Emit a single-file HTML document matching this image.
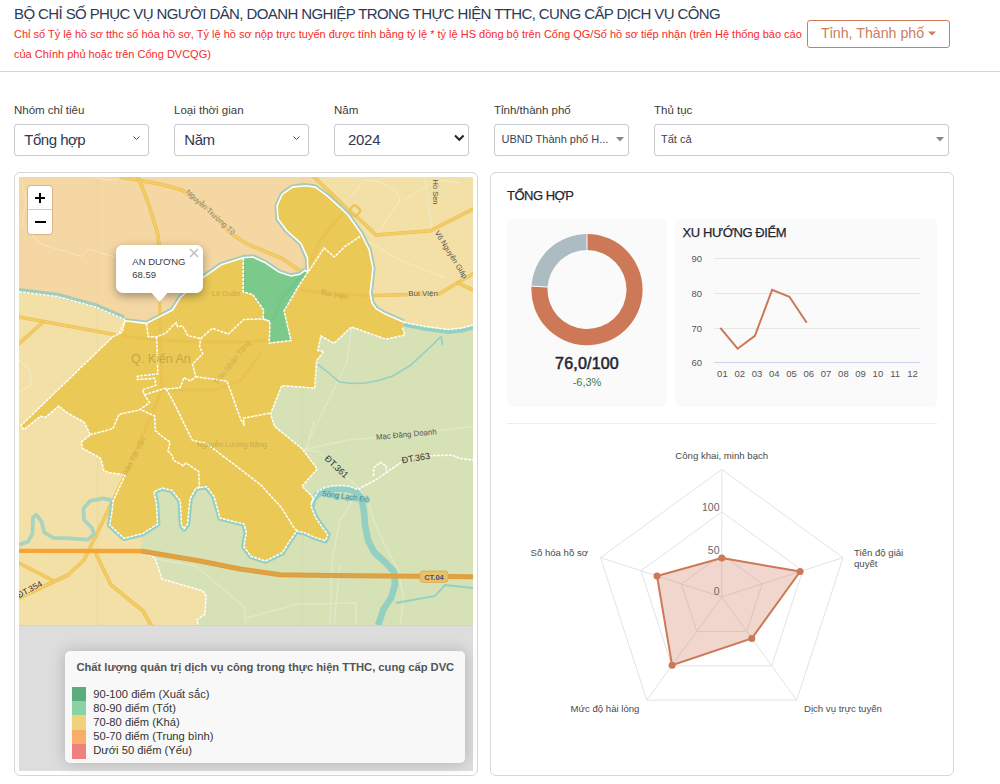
<!DOCTYPE html>
<html><head><meta charset="utf-8">
<style>
*{box-sizing:border-box;margin:0;padding:0}
html,body{width:1000px;height:784px;overflow:hidden;background:#fff;font-family:"Liberation Sans",sans-serif}
.abs{position:absolute;white-space:nowrap}
#title{left:14px;top:4px;font-size:15px;letter-spacing:-0.6px;color:#2d3a55;line-height:20px}
.sub{left:14px;font-size:11px;color:#f72a2a;line-height:20px}
#btn{left:807px;top:20px;width:143px;height:28px;border:1px solid #cf7d58;border-radius:3px;color:#c8805f;font-size:14.2px;line-height:24px;padding-left:13px}
#hr{left:0;top:71px;width:1000px;height:1px;background:#d4d4d4}
.lbl{top:103px;font-size:11.5px;color:#3b3b3b;line-height:14px}
.sel{top:124px;height:32px;border:1px solid #c9cdd2;border-radius:3px;background:#fff;color:#2d3a55}
.lg{left:93.2px;font-size:11.2px;color:#333;line-height:14px}
.st{top:131px;font-size:15px;letter-spacing:-0.5px;color:#2d3a55;line-height:18px}
.st2{top:132px;font-size:11px;color:#3a4250;line-height:14px}
.card{border:1px solid #d6d6d6;border-radius:6px;background:#fff}
</style></head>
<body>
<div id="title" class="abs">BỘ CHỈ SỐ PHỤC VỤ NGƯỜI DÂN, DOANH NGHIỆP TRONG THỰC HIỆN TTHC, CUNG CẤP DỊCH VỤ CÔNG</div>
<div class="abs sub" style="top:24px">Chỉ số Tỷ lệ hồ sơ tthc số hóa hồ sơ, Tỷ lệ hồ sơ nộp trực tuyến được tính bằng tỷ lệ * tỷ lệ HS đồng bộ trên Cổng QG/Số hồ sơ tiếp nhận (trên Hệ thống báo cáo</div>
<div class="abs sub" style="top:44px">của Chính phủ hoặc trên Cổng DVCQG)</div>
<div id="btn" class="abs">Tỉnh, Thành phố</div>
<div id="hr" class="abs"></div>
<svg class="abs" style="left:920px;top:25px" width="20" height="15"><path d="M8,6.5 L16,6.5 L12,10.5 Z" fill="#cf7d58"/></svg>

<div class="abs lbl" style="left:14px">Nhóm chỉ tiêu</div>
<div class="abs lbl" style="left:174px">Loại thời gian</div>
<div class="abs lbl" style="left:334px">Năm</div>
<div class="abs lbl" style="left:494px">Tỉnh/thành phố</div>
<div class="abs lbl" style="left:654px">Thủ tục</div>

<div class="abs sel" style="left:14px;width:135px"></div>
<div class="abs sel" style="left:174px;width:135px"></div>
<div class="abs sel" style="left:334px;width:135px"></div>
<div class="abs sel" style="left:494px;width:135px"></div>
<div class="abs sel" style="left:654px;width:295px"></div>
<div id="s1" class="abs st" style="left:24.3px">Tổng hợp</div>
<div id="s2" class="abs st" style="left:184.3px">Năm</div>
<div id="s3" class="abs st" style="left:348px;letter-spacing:-0.3px">2024</div>
<div id="s4" class="abs st2" style="left:501.6px">UBND Thành phố H...</div>
<div id="s5" class="abs st2" style="left:661px">Tất cả</div>
<svg class="abs" style="left:0;top:100px" width="1000" height="60">
 <path d="M133.5,36.5 L136.5,39.5 L139.5,36.5" fill="none" stroke="#555" stroke-width="1"/>
 <path d="M293.5,36.5 L296.5,39.5 L299.5,36.5" fill="none" stroke="#555" stroke-width="1"/>
 <path d="M455,35.5 L459.3,39.8 L463.6,35.5" fill="none" stroke="#222" stroke-width="2"/>
 <path d="M616,37 L624,37 L620,41.5 Z" fill="#888"/>
 <path d="M936,37 L944,37 L940,41.5 Z" fill="#888"/>
</svg>
<div class="abs card" style="left:14px;top:172px;width:464px;height:604px"></div>
<!--MAP--><svg class="abs" style="left:19px;top:177px" width="454" height="594" viewBox="19 177 454 594" font-family="Liberation Sans">
<defs><clipPath id="tc"><rect x="19" y="177" width="454" height="448"/></clipPath></defs>
<rect x="19" y="177" width="454" height="594" fill="#dddddd"/>
<g clip-path="url(#tc)">
<rect x="19" y="177" width="454" height="448" fill="#f3e0a6"/>
<polygon points="19.0,177.0 321.0,177.0 316.0,186.0 305.0,185.0 292.0,186.5 282.0,194.0 277.0,206.0 278.0,219.0 286.5,230.3 301.0,243.3 307.4,257.7 308.0,271.7 305.0,270.4 300.0,274.2 291.0,276.0 278.3,271.7 265.5,262.8 252.8,257.0 243.2,257.7 221.2,264.8 200.8,279.0 180.4,297.4 172.5,310.0 146.4,322.0 124.2,319.5 95.5,307.0 57.3,296.6 19.0,291.8" fill="#f5d7a3"/>
<polygon points="473.0,325.0 462.0,328.0 448.0,329.5 425.0,326.5 403.5,322.0 402.4,327.8 405.0,334.9 386.0,339.2 351.4,327.0 334.0,343.3 320.8,336.0 317.8,350.4 323.9,351.4 316.7,360.6 314.7,388.0 281.8,385.7 270.5,414.0 274.7,426.5 302.0,448.6 317.3,469.0 302.0,486.3 313.3,497.6 311.0,506.0 315.8,518.0 327.8,534.7 325.4,540.7 314.0,537.0 303.8,532.4 296.6,531.0 289.0,542.0 282.3,552.7 265.5,561.0 251.0,556.3 243.9,546.7 246.3,532.4 243.9,524.0 234.3,521.6 220.0,518.0 214.0,496.4 206.7,486.8 196.0,488.0 190.0,498.8 187.5,524.0 184.0,528.8 181.5,525.0 180.3,501.0 172.0,490.4 162.4,488.0 154.0,491.6 156.4,503.6 157.6,524.0 143.0,533.5 141.0,551.0 155.0,558.0 162.0,579.0 203.0,591.0 206.0,596.0 205.0,614.0 197.0,620.0 198.0,625.0 473.0,625.0" fill="#d6e1b6"/>
<line x1="97.5" y1="177" x2="97.5" y2="625" stroke="#e2cf9c" stroke-width="0.7" opacity="0.6"/>
<line x1="302.5" y1="177" x2="302.5" y2="625" stroke="#c9c79a" stroke-width="0.7" opacity="0.35"/>
<polyline points="22,183 26,200 22,226 42,244.4 81.8,256.6 88.7,249 118,258" fill="none" stroke="#f9e3c0" stroke-width="1"/><path d="M95,177 Q110,183 125,177" fill="none" stroke="#f9e3c0" stroke-width="1"/>
<polyline points="19,360 30,370 31,385 19,392" fill="none" stroke="#f8ecc8" stroke-width="1"/>
<polyline points="350,197 365,180 380,182 395,190 400,200 380,230" fill="none" stroke="#f7ebc6" stroke-width="1"/>
<polyline points="405,200 420,190 440,180 460,183" fill="none" stroke="#f7ebc6" stroke-width="1"/>
<polyline points="360,237 400,260 445,278" fill="none" stroke="#f7ebc6" stroke-width="1"/>
<polyline points="424.8,177.0 428.0,200.0 432.0,231.7" fill="none" stroke="#e6edd2" stroke-width="1.6" stroke-linejoin="round" opacity="0.6"/>
<polyline points="303.2,449.6 348.0,440.0 376.8,437.6 473.0,426.7" fill="none" stroke="#e6edd2" stroke-width="1.6" stroke-linejoin="round" opacity="0.6"/>
<polyline points="303.2,449.6 319.2,452.0 357.6,487.2 368.8,503.2 373.6,520.0 385.0,545.0 398.0,570.0 404.0,600.0 400.0,625.0" fill="none" stroke="#e6edd2" stroke-width="1.6" stroke-linejoin="round" opacity="0.6"/>
<polyline points="314.4,420.0 306.4,448.8" fill="none" stroke="#e6edd2" stroke-width="1.6" stroke-linejoin="round" opacity="0.6"/>
<polyline points="352.8,500.0 340.0,520.0 332.0,560.0 330.0,625.0" fill="none" stroke="#e6edd2" stroke-width="1.6" stroke-linejoin="round" opacity="0.6"/>
<polyline points="155.0,558.7 196.0,566.0 244.0,606.7 246.0,625.0" fill="none" stroke="#e6edd2" stroke-width="1.6" stroke-linejoin="round" opacity="0.6"/>
<polyline points="244.0,618.7 296.6,604.3 356.0,603.0 356.0,625.0" fill="none" stroke="#e6edd2" stroke-width="1.6" stroke-linejoin="round" opacity="0.6"/>
<polyline points="340.0,565.0 334.0,625.0" fill="none" stroke="#e6edd2" stroke-width="1.6" stroke-linejoin="round" opacity="0.6"/>
<polyline points="351.8,326.8 346.4,364.3 309,440" fill="none" stroke="#e3ecd3" stroke-width="1"/>
<polyline points="121.0,177.3 160.0,184.0 182.4,190.3 207.0,207.6 231.4,234.0 247.8,244.3 282.4,258.6 302.9,272.9" fill="none" stroke="#e9b94f" stroke-width="3.6" stroke-linejoin="round" stroke-linecap="round" opacity="0.9"/>
<polyline points="121.0,177.3 160.0,184.0 182.4,190.3 207.0,207.6 231.4,234.0 247.8,244.3 282.4,258.6 302.9,272.9" fill="none" stroke="#f3cc62" stroke-width="2.4" stroke-linejoin="round" stroke-linecap="round"/>
<polyline points="372.0,295.5 439.4,293.7 457.7,282.8 473.0,273.7" fill="none" stroke="#e9b94f" stroke-width="3.6" stroke-linejoin="round" stroke-linecap="round" opacity="0.9"/>
<polyline points="372.0,295.5 439.4,293.7 457.7,282.8 473.0,273.7" fill="none" stroke="#f3cc62" stroke-width="2.4" stroke-linejoin="round" stroke-linecap="round"/>
<polyline points="138.0,177.0 149.0,205.0 158.0,235.0 159.0,246.0" fill="none" stroke="#e9b94f" stroke-width="3.6" stroke-linejoin="round" stroke-linecap="round" opacity="0.9"/>
<polyline points="138.0,177.0 149.0,205.0 158.0,235.0 159.0,246.0" fill="none" stroke="#f3cc62" stroke-width="2.4" stroke-linejoin="round" stroke-linecap="round"/>
<polyline points="19.0,317.0 122.4,336.0" fill="none" stroke="#e9b94f" stroke-width="3.6" stroke-linejoin="round" stroke-linecap="round" opacity="0.9"/>
<polyline points="19.0,317.0 122.4,336.0" fill="none" stroke="#f3cc62" stroke-width="2.4" stroke-linejoin="round" stroke-linecap="round"/>
<polyline points="19.0,343.7 42.0,323.0" fill="none" stroke="#e9b94f" stroke-width="3.6" stroke-linejoin="round" stroke-linecap="round" opacity="0.9"/>
<polyline points="19.0,343.7 42.0,323.0" fill="none" stroke="#f3cc62" stroke-width="2.4" stroke-linejoin="round" stroke-linecap="round"/>
<polyline points="314.0,177.0 348.0,209.5 362.0,221.5 376.0,235.0 430.3,230.8 473.0,209.0" fill="none" stroke="#e9b94f" stroke-width="3.6" stroke-linejoin="round" stroke-linecap="round" opacity="0.9"/>
<polyline points="314.0,177.0 348.0,209.5 362.0,221.5 376.0,235.0 430.3,230.8 473.0,209.0" fill="none" stroke="#f3cc62" stroke-width="2.4" stroke-linejoin="round" stroke-linecap="round"/>
<polyline points="457.7,282.8 473.0,290.0" fill="none" stroke="#e9b94f" stroke-width="3.6" stroke-linejoin="round" stroke-linecap="round" opacity="0.9"/>
<polyline points="457.7,282.8 473.0,290.0" fill="none" stroke="#f3cc62" stroke-width="2.4" stroke-linejoin="round" stroke-linecap="round"/>
<polyline points="125.5,474.7 84.0,560.0 68.0,575.0 19.0,598.0" fill="none" stroke="#e9b94f" stroke-width="3.6" stroke-linejoin="round" stroke-linecap="round" opacity="0.9"/>
<polyline points="125.5,474.7 84.0,560.0 68.0,575.0 19.0,598.0" fill="none" stroke="#f3cc62" stroke-width="2.4" stroke-linejoin="round" stroke-linecap="round"/>
<polyline points="19.0,563.0 52.0,580.0" fill="none" stroke="#e9b94f" stroke-width="3.6" stroke-linejoin="round" stroke-linecap="round" opacity="0.9"/>
<polyline points="19.0,563.0 52.0,580.0" fill="none" stroke="#f3cc62" stroke-width="2.4" stroke-linejoin="round" stroke-linecap="round"/>
<polyline points="96.0,554.0 111.0,585.0 143.0,611.0 151.0,625.0" fill="none" stroke="#e9b94f" stroke-width="3.6" stroke-linejoin="round" stroke-linecap="round" opacity="0.9"/>
<polyline points="96.0,554.0 111.0,585.0 143.0,611.0 151.0,625.0" fill="none" stroke="#f3cc62" stroke-width="2.4" stroke-linejoin="round" stroke-linecap="round"/>
<rect x="350.3" y="206.3" width="9" height="9" rx="2.5" transform="rotate(40 354.8 210.8)" fill="none" stroke="#edc257" stroke-width="2.4"/>
<polyline points="19.0,290.2 57.3,295.0 95.5,305.4 124.2,317.9" fill="none" stroke="#a6cbb6" stroke-width="4.6" stroke-linejoin="round"/>
<polyline points="125.0,320.8 146.4,323.4 172.5,310.0 180.4,297.4 200.8,279.0 221.2,264.8 243.2,257.7 252.8,257.0 265.5,262.8 278.3,271.7 291.0,276.0 300.0,274.2 305.0,270.4 308.0,271.7 307.4,257.7 300.9,243.3 286.5,230.3 277.9,218.8 277.1,205.8 282.2,194.3 292.3,187.1 305.2,185.7 315.3,187.1 326.9,195.7 340.0,207.3 348.2,215.3 361.0,233.5 369.2,250.0 372.9,268.2 370.1,293.7 372.0,302.8 376.0,308.6 384.7,313.8 403.5,322.0" fill="none" stroke="#a6cbb6" stroke-width="5.4" stroke-linejoin="round"/>
<polyline points="403.6,324.5 425,328.8 448,332 462,330.5 473,327.5" fill="none" stroke="#93d0c4" stroke-width="4" stroke-linejoin="round"/>
<polyline points="19.0,544.8 27.9,541.6 32.4,534.0 33.0,517.4 36.2,514.8 41.3,521.2 44.5,532.7 53.4,537.8 70.0,538.4 87.9,539.7 94.3,534.0 91.7,527.6 84.0,520.0 83.4,508.5 90.4,500.8 103.2,498.3 113.4,500.8 115.3,508.5" fill="none" stroke="#a9d2bf" stroke-width="3.8" stroke-linejoin="round"/>
<polyline points="311.0,506.0 315.8,518.0 327.8,534.7 325.4,540.7 314.0,537.0 303.8,532.4 296.6,531.0 289.0,542.0 282.3,552.7 265.5,561.0 251.0,556.3 243.9,546.7 246.3,532.4 243.9,524.0 234.3,521.6 220.0,518.0 214.0,496.4 206.7,486.8 196.0,488.0 190.0,498.8 187.5,524.0 184.0,528.8 181.5,525.0 180.3,501.0 172.0,490.4 162.4,488.0 154.0,491.6 156.4,503.6 157.6,524.0 143.0,533.5 124.0,538.3 109.6,525.0 112.0,512.0 113.0,501.2" fill="none" stroke="#93d0c4" stroke-width="5.6" stroke-linejoin="round"/>
<polyline points="311.2,507.0 313.0,500.0 318.0,494.0 325.0,490.5 333.0,488.8 342.0,488.6 350.0,489.5 356.0,492.0 360.0,496.5 362.5,503.0 364.0,512.0 365.0,525.0 368.0,540.0 374.0,552.0 386.0,563.0 394.3,572.0 395.0,585.0 391.0,598.0 383.6,609.0 378.2,625.0" fill="none" stroke="#93d0c4" stroke-width="6.6" stroke-linejoin="round"/>
<polyline points="317.9,364.3 330.0,374.0 339.3,382.0 352.0,383.5 366.0,383.0 380.0,380.0 392.9,375.9 410.7,365.2 425.0,352.0 441.0,336.6" fill="none" stroke="#93d0c4" stroke-width="1.6" stroke-linejoin="round"/>
<polyline points="441.2,336.4 442.6,345.0" fill="none" stroke="#93d0c4" stroke-width="1.6"/>
<polyline points="396.0,603.0 435.0,596.0 445.0,585.0 473.0,588.0" fill="none" stroke="#93d0c4" stroke-width="1.8"/>
<polygon points="125.0,320.8 146.4,323.4 172.5,310.0 180.4,297.4 200.8,279.0 221.2,264.8 243.2,257.7 252.8,257.0 265.5,262.8 278.3,271.7 291.0,276.0 300.0,274.2 305.0,270.4 308.0,271.7 307.4,257.7 300.9,243.3 286.5,230.3 277.9,218.8 277.1,205.8 282.2,194.3 292.3,187.1 305.2,185.7 315.3,187.1 326.9,195.7 340.0,207.3 348.2,215.3 361.0,233.5 369.2,250.0 372.9,268.2 370.1,293.7 372.0,302.8 376.0,308.6 384.7,313.8 403.5,322.0 402.4,327.8 405.0,334.9 386.0,339.2 351.4,327.0 334.0,343.3 320.8,336.0 317.8,350.4 323.9,351.4 316.7,360.6 314.7,388.0 281.8,385.7 270.5,414.0 274.7,426.5 302.0,448.6 317.3,469.0 302.0,486.3 313.3,497.6 311.0,506.0 315.8,518.0 327.8,534.7 325.4,540.7 314.0,537.0 303.8,532.4 296.6,531.0 289.0,542.0 282.3,552.7 265.5,561.0 251.0,556.3 243.9,546.7 246.3,532.4 243.9,524.0 234.3,521.6 220.0,518.0 214.0,496.4 206.7,486.8 196.0,488.0 190.0,498.8 187.5,524.0 184.0,528.8 181.5,525.0 180.3,501.0 172.0,490.4 162.4,488.0 154.0,491.6 156.4,503.6 157.6,524.0 143.0,533.5 124.0,538.3 109.6,525.0 112.0,512.0 113.0,501.2 125.3,474.7 109.0,472.7 103.9,470.6 100.8,458.4 82.4,448.2 81.4,442.0 90.4,434.7 84.3,422.4 66.0,412.0 58.8,406.0 45.5,417.3 40.4,416.3 24.0,429.6 21.0,425.5 112.9,336.7 119.0,333.7" fill="#eac957"/>
<polygon points="243.2,257.7 252.8,257.0 265.5,262.8 278.3,271.7 291.0,276.0 300.0,274.2 305.0,270.4 308.0,271.7 298.0,287.0 284.0,311.0 291.0,340.6 269.3,343.0 270.0,321.4 263.0,318.9 263.6,310.0 252.8,294.6 243.2,292.0" fill="#7bc98b"/>
<polyline points="122.0,336.0 160.0,340.0 200.0,342.0 240.0,342.0 266.0,340.0" fill="none" stroke="#e8c04e" stroke-width="3" opacity="0.8"/>
<polyline points="159.0,246.0 160.0,330.0 162.0,390.0 125.5,474.7" fill="none" stroke="#e8c04e" stroke-width="3" opacity="0.8"/>
<polyline points="162.0,390.0 215.0,390.0 240.0,381.0 262.0,352.0" fill="none" stroke="#e8c04e" stroke-width="2.5" opacity="0.7"/>
<polyline points="272.0,322.0 282.0,298.0 303.0,274.0" fill="none" stroke="#72c48a" stroke-width="3" opacity="0.6"/>
<polyline points="300.0,290.0 330.0,294.0 372.0,295.5" fill="none" stroke="#e8c04e" stroke-width="3" opacity="0.8"/>
<polyline points="342.0,214.0 320.0,240.0 308.0,267.0" fill="none" stroke="#e8c04e" stroke-width="3" opacity="0.6"/>
<polyline points="125.0,320.8 146.4,323.4 172.5,310.0 180.4,297.4 200.8,279.0 221.2,264.8 243.2,257.7 252.8,257.0 265.5,262.8 278.3,271.7 291.0,276.0 300.0,274.2 305.0,270.4 308.0,271.7 307.4,257.7 300.9,243.3 286.5,230.3 277.9,218.8 277.1,205.8 282.2,194.3 292.3,187.1 305.2,185.7 315.3,187.1 326.9,195.7 340.0,207.3 348.2,215.3 361.0,233.5 369.2,250.0 372.9,268.2 370.1,293.7 372.0,302.8 376.0,308.6 384.7,313.8 403.5,322.0" fill="none" stroke="#fff" stroke-width="1.6" stroke-linejoin="round"/>
<polyline points="402.4,327.8 405.0,334.9 386.0,339.2 351.4,327.0 334.0,343.3 320.8,336.0 317.8,350.4 323.9,351.4 316.7,360.6 314.7,388.0 281.8,385.7 270.5,414.0 274.7,426.5 302.0,448.6 317.3,469.0 302.0,486.3 313.3,497.6 311.0,506.0 315.8,518.0 327.8,534.7 325.4,540.7 314.0,537.0 303.8,532.4 296.6,531.0 289.0,542.0 282.3,552.7 265.5,561.0 251.0,556.3 243.9,546.7 246.3,532.4 243.9,524.0 234.3,521.6 220.0,518.0 214.0,496.4 206.7,486.8 196.0,488.0 190.0,498.8 187.5,524.0 184.0,528.8 181.5,525.0 180.3,501.0 172.0,490.4 162.4,488.0 154.0,491.6 156.4,503.6 157.6,524.0 143.0,533.5 124.0,538.3 109.6,525.0 112.0,512.0 113.0,501.2 125.3,474.7 109.0,472.7 103.9,470.6 100.8,458.4 82.4,448.2 81.4,442.0 90.4,434.7 84.3,422.4 66.0,412.0 58.8,406.0 45.5,417.3 40.4,416.3 24.0,429.6 21.0,425.5 112.9,336.7 119.0,333.7 125.0,320.8" fill="none" stroke="#fff" stroke-width="1.5" stroke-dasharray="3,1"/>
<polyline points="308.0,271.7 298.0,287.0 284.0,311.0 291.0,340.6 269.3,343.0 270.0,321.4 263.0,318.9 263.6,310.0 252.8,294.6 243.2,292.0 243.2,257.7" fill="none" stroke="#fff" stroke-width="1.5" stroke-dasharray="3,1"/>
<polyline points="125.0,320.8 122.1,332.3 119.0,333.7" fill="none" stroke="#fff" stroke-width="1.5" stroke-dasharray="3,1"/>
<polyline points="146.4,323.4 148.3,336.8 156.6,336.8 166.0,333.0 173.0,325.3 176.3,322.8 177.6,326.6 182.7,326.0 187.8,335.5 200.6,338.7 212.3,328.3 228.3,334.0 243.8,319.5 263.0,318.9 270.0,321.4" fill="none" stroke="#fff" stroke-width="1.5" stroke-dasharray="3,1"/>
<polyline points="156.6,336.8 157.8,373.8 137.4,376.3 137.4,379.5 154.6,378.2 155.9,385.3 142.5,389.7 144.4,394.8 148.3,400.6 149.6,402.6 139.3,410.0 119.0,414.3 112.9,428.6 90.4,434.7" fill="none" stroke="#fff" stroke-width="1.5" stroke-dasharray="3,1"/>
<polyline points="144.4,394.8 164.8,388.4 166.1,389.0 180.0,387.8 184.0,377.6 190.4,380.8 195.7,376.8 192.6,364.0 202.8,353.8 199.6,346.8 200.6,338.7" fill="none" stroke="#fff" stroke-width="1.5" stroke-dasharray="3,1"/>
<polyline points="195.7,376.8 215.5,379.3 227.0,381.2 241.0,420.0 244.0,424.5 243.6,418.2 270.4,413.0" fill="none" stroke="#fff" stroke-width="1.5" stroke-dasharray="3,1"/>
<polyline points="166.1,389.0 172.5,400.0 192.3,440.2 197.4,441.5 206.3,443.4 240.0,468.9 261.2,485.3 281.6,507.8 294.9,529.2 298.0,530.2" fill="none" stroke="#fff" stroke-width="1.5" stroke-dasharray="3,1"/>
<polyline points="141.9,410.2 154.7,416.0 155.3,430.6 163.6,437.6 170.0,442.0 168.0,451.0 172.5,456.0 173.2,460.0 183.4,465.7 186.0,463.0 198.7,471.4 199.3,485.5 198.8,489.0" fill="none" stroke="#fff" stroke-width="1.5" stroke-dasharray="3,1"/>
<polyline points="360.0,236.5 344.6,246.7 334.4,257.0 324.0,248.0 309.0,271.0" fill="none" stroke="#fff" stroke-width="1.5" stroke-dasharray="3,1"/>
<polyline points="19.0,291.8 57.3,296.6 95.5,307.0 124.2,319.5 125.0,320.8" fill="none" stroke="#fff" stroke-width="1.5" stroke-dasharray="3,1"/>
<polyline points="403.6,322.3 425.0,326.5 448.0,329.5 462.0,328.0 473.0,325.0" fill="none" stroke="#fff" stroke-width="1.5" stroke-dasharray="3,1"/>
<polyline points="311.0,503.5 318.0,491.0 325.0,487.5 333.0,485.8 342.0,485.6 350.0,486.5 357.6,489.5 376.8,479.2 402.4,461.6 415.2,456.0 452.0,455.2 460.0,458.4 473.0,460.0" fill="none" stroke="#fff" stroke-width="1.5" stroke-dasharray="3,1"/>
<polyline points="373.6,476.0 373.6,468.0 380.0,462.4 386.4,466.0 386.4,471.2" fill="none" stroke="#fff" stroke-width="1.5" stroke-dasharray="3,1"/>
<polyline points="141.0,551.0 155.0,558.0 162.0,579.0 203.0,591.0 206.0,596.0 205.0,614.0 197.0,620.0 198.0,625.0" fill="none" stroke="#fff" stroke-width="1.5" stroke-dasharray="3,1"/>
<polyline points="19,550.8 141,551" fill="none" stroke="#f6a337" stroke-width="4.3"/>
<polyline points="141,551 200,561 240,569 280,574.8 330,575.6 473,576.7" fill="none" stroke="#e29d38" stroke-width="5" stroke-linejoin="round"/><polyline points="141,551 200,561 240,569 280,574.8 330,575.6 473,576.7" fill="none" stroke="#dca447" stroke-width="2.6" stroke-linejoin="round"/>
<rect x="420" y="571" width="28" height="11.5" rx="3" fill="#e8c26a" stroke="#d9a950" stroke-width="0.8"/>
<text x="434" y="580" font-size="7.5" fill="#3d4f8f" text-anchor="middle" font-weight="bold">CT.04</text>
<text x="131.0" y="363.0" font-size="12.5" fill="#b89a3c" text-anchor="start"  opacity="0.70" font-weight="normal">Q. Kiến An</text>
<text x="226.0" y="296.0" font-size="7.5" fill="#c9a84a" text-anchor="middle"  opacity="0.90" font-weight="normal">Lê Duẩn</text>
<text x="232.0" y="447.0" font-size="7.5" fill="#c9a84a" text-anchor="middle"  opacity="0.90" font-weight="normal">Nguyễn Lương Bằng</text>
<text x="334.0" y="297.0" font-size="7.5" fill="#c9a84a" text-anchor="middle"  opacity="0.90" font-weight="normal" transform="rotate(12.0 334.0 297.0)">Bùi Viện</text>
<text x="209.0" y="214.0" font-size="7.5" fill="#8a7a60" text-anchor="middle" stroke="#f5d7a3" stroke-width="2" paint-order="stroke" stroke-opacity="0.8" opacity="1.00" font-weight="normal" transform="rotate(42.0 209.0 214.0)">Nguyễn Trường Tộ</text>
<text x="423.0" y="296.0" font-size="8.0" fill="#555" text-anchor="middle" stroke="#f3e0a6" stroke-width="2" paint-order="stroke" stroke-opacity="0.8" opacity="1.00" font-weight="normal">Bùi Viện</text>
<text x="433.0" y="192.0" font-size="7.5" fill="#555" text-anchor="middle" stroke="#f3e0a6" stroke-width="2" paint-order="stroke" stroke-opacity="0.8" opacity="1.00" font-weight="normal" transform="rotate(90.0 433.0 192.0)">Hồ Sen</text>
<text x="449.0" y="256.0" font-size="7.5" fill="#555" text-anchor="middle" stroke="#f3e0a6" stroke-width="2" paint-order="stroke" stroke-opacity="0.8" opacity="1.00" font-weight="normal" transform="rotate(58.0 449.0 256.0)">Võ Nguyên Giáp</text>
<text x="406.5" y="437.0" font-size="7.8" fill="#555" text-anchor="middle" stroke="#d6e1b6" stroke-width="2" paint-order="stroke" stroke-opacity="0.8" opacity="1.00" font-weight="normal" transform="rotate(-5.0 406.5 437.0)">Mạc Đăng Doanh</text>
<text x="334.4" y="469.0" font-size="9.0" fill="#333" text-anchor="middle" stroke="#d6e1b6" stroke-width="2" paint-order="stroke" stroke-opacity="0.8" opacity="1.00" font-weight="normal" transform="rotate(43.0 334.4 469.0)">ĐT.361</text>
<text x="416.3" y="461.0" font-size="9.0" fill="#333" text-anchor="middle" stroke="#d6e1b6" stroke-width="2" paint-order="stroke" stroke-opacity="0.8" opacity="1.00" font-weight="normal" transform="rotate(-10.0 416.3 461.0)">ĐT.363</text>
<text x="345.0" y="499.0" font-size="7.5" fill="#4f8a90" text-anchor="middle" stroke="#93d0c4" stroke-width="2" paint-order="stroke" stroke-opacity="0.8" opacity="1.00" font-weight="normal" transform="rotate(8.0 345.0 499.0)">Sông Lạch Đò</text>
<text x="31.0" y="592.0" font-size="8.5" fill="#333" text-anchor="middle" stroke="#f3e0a6" stroke-width="2" paint-order="stroke" stroke-opacity="0.8" opacity="1.00" font-weight="normal" transform="rotate(-28.0 31.0 592.0)">ĐT.354</text>
<text x="234.0" y="364.0" font-size="7.5" fill="#c9a84a" text-anchor="middle"  opacity="0.80" font-weight="normal" transform="rotate(-52.0 234.0 364.0)">Trần Nhân Tông</text>
<text x="136.0" y="458.0" font-size="7.5" fill="#c9a84a" text-anchor="middle"  opacity="0.80" font-weight="normal" transform="rotate(-63.0 136.0 458.0)">Trần Tất Văn</text>
</g>
<line x1="19" y1="625.5" x2="473" y2="625.5" stroke="#cfd8b4" stroke-width="1"/>
</svg><!--/MAP-->
<div class="abs" style="left:28px;top:186px;width:24px;height:48px;background:#fff;border-radius:3px;box-shadow:0 0 0 1px rgba(120,90,40,0.25)"></div>
<div class="abs" style="left:28px;top:209px;width:24px;height:1px;background:#ccc"></div>
<div class="abs" style="left:34.7px;top:197px;width:10px;height:2px;background:#000"></div>
<div class="abs" style="left:38.8px;top:193px;width:2px;height:10px;background:#000"></div>
<div class="abs" style="left:35px;top:220.6px;width:10.5px;height:2px;background:#000"></div>
<div class="abs" style="left:116px;top:244.7px;width:87px;height:48.6px;background:#fff;border-radius:7px;box-shadow:0 3px 10px rgba(0,0,0,0.35)"></div>
<svg class="abs" style="left:148px;top:292px" width="24" height="12"><polygon points="2.8,0 20.2,0 11.5,10" fill="#fff"/></svg>
<div class="abs" style="left:116px;top:244.7px;width:87px;height:10px;background:#fff;border-radius:7px 7px 0 0"></div>
<div id="pop1" class="abs" style="left:132.3px;top:256px;font-size:9.5px;color:#3c3c3c;line-height:12.7px">AN DƯƠNG<br>68.59</div>
<svg class="abs" style="left:188px;top:247px" width="12" height="12"><path d="M2,2 L10,10 M10,2 L2,10" stroke="#c3c3c3" stroke-width="1.6"/></svg>
<div class="abs" style="left:65px;top:651px;width:400px;height:112px;background:#f8f8f8;border-radius:5px;box-shadow:0 0 15px rgba(0,0,0,0.2)"></div>
<div id="legt" class="abs" style="left:76.4px;top:661px;font-size:11.2px;font-weight:bold;color:#555">Chất lượng quản trị dịch vụ công trong thực hiện TTHC, cung cấp DVC</div>
<div class="abs" style="left:72px;top:687px;width:14px;height:14px;background:#5aad7e"></div>
<div class="abs" style="left:72px;top:701px;width:14px;height:14px;background:#88d2a6"></div>
<div class="abs" style="left:72px;top:715px;width:14px;height:15px;background:#f0d27a"></div>
<div class="abs" style="left:72px;top:730px;width:14px;height:14px;background:#f7ae6a"></div>
<div class="abs" style="left:72px;top:744px;width:14px;height:15px;background:#ef8080"></div>
<div id="leg0" class="abs lg" style="top:686.5px">90-100 điểm (Xuất sắc)</div>
<div id="leg1" class="abs lg" style="top:700.7px">80-90 điểm (Tốt)</div>
<div id="leg2" class="abs lg" style="top:714.9px">70-80 điểm (Khá)</div>
<div id="leg3" class="abs lg" style="top:729.1px">50-70 điểm (Trung bình)</div>
<div id="leg4" class="abs lg" style="top:743.3px">Dưới 50 điểm (Yếu)</div>


<div class="abs card" style="left:490px;top:172px;width:464px;height:604px"></div>

<div id="th" class="abs" style="left:507px;top:188px;font-size:13px;letter-spacing:-0.5px;color:#1f2633;font-weight:normal;-webkit-text-stroke:0.25px #1f2633">TỔNG HỢP</div>
<div class="abs" style="left:507px;top:218px;width:160px;height:189px;background:#fafafa;border-radius:6px"></div>
<div class="abs" style="left:675px;top:218px;width:262px;height:189px;background:#fafafa;border-radius:6px"></div>
<div class="abs" style="left:507px;top:423px;width:430px;height:1px;background:#e7edf6"></div>
<div id="xu" class="abs" style="left:682.5px;top:225px;font-size:13px;letter-spacing:-0.4px;color:#1f2633;font-weight:normal;-webkit-text-stroke:0.25px #1f2633">XU HƯỚNG ĐIỂM</div>
<div id="score" class="abs" style="left:507px;width:160px;text-align:center;top:355px;font-size:16px;font-weight:normal;-webkit-text-stroke:0.55px #1f2633;color:#1f2633;letter-spacing:0.2px">76,0/100</div>
<div id="pct" class="abs" style="left:507px;width:160px;text-align:center;top:376px;font-size:11px;color:#3f7d45">-6,3%</div>
<svg class="abs" style="left:0;top:0" width="1000" height="784">
 <path d="M587,234 A55.6,55.6 0 1,1 531.51,286.11 L547.58,287.12 A39.5,39.5 0 1,0 587,250.1 Z" fill="#cd7856"/>
 <path d="M531.51,286.11 A55.6,55.6 0 0,1 587,234 L587,250.1 A39.5,39.5 0 0,0 547.58,287.12 Z" fill="#adbcc3"/>
 <line x1="587" y1="233" x2="587" y2="251" stroke="#fafafa" stroke-width="1"/>
 <line x1="530" y1="286" x2="549" y2="287.2" stroke="#fafafa" stroke-width="1"/>
 <g stroke="#e6e6e6" stroke-width="1">
  <line x1="714" y1="258.5" x2="920" y2="258.5"/>
  <line x1="714" y1="293.5" x2="920" y2="293.5"/>
  <line x1="714" y1="328.5" x2="920" y2="328.5"/>
 </g>
 <line x1="714" y1="362.5" x2="920" y2="362.5" stroke="#c9d5ea" stroke-width="1"/>
 <polyline points="720.3,327.9 737.6,348.7 754.9,335.9 772.1,289.8 789.4,296.8 806.7,322.7" fill="none" stroke="#cd7856" stroke-width="2"/>
 <g font-family="Liberation Sans" font-size="9.5" fill="#555" text-anchor="end">
  <text x="702" y="262">90</text><text x="702" y="297">80</text><text x="702" y="332">70</text><text x="702" y="366">60</text>
 </g>
 <g font-family="Liberation Sans" font-size="9.5" fill="#555" text-anchor="middle">
  <text x="722.4" y="377">01</text><text x="739.7" y="377">02</text><text x="757" y="377">03</text><text x="774.2" y="377">04</text><text x="791.5" y="377">05</text><text x="808.8" y="377">06</text><text x="826.1" y="377">07</text><text x="843.4" y="377">08</text><text x="860.6" y="377">09</text><text x="877.9" y="377">10</text><text x="895.2" y="377">11</text><text x="912.5" y="377">12</text>
 </g>
 <g fill="none" stroke="#e3e3e3" stroke-width="1">
  <polygon points="721.8,469.5 843.0,557.6 796.7,700.1 646.8,700.1 600.5,557.6"/>
  <polygon points="721.8,512.0 802.6,570.7 771.7,665.8 671.8,665.8 640.9,570.7"/>
  <polygon points="721.8,554.5 762.2,583.9 746.7,631.4 696.8,631.4 681.3,583.9"/>
  <line x1="721.75" y1="597" x2="721.8" y2="469.5"/><line x1="721.75" y1="597" x2="843.0" y2="557.6"/><line x1="721.75" y1="597" x2="796.7" y2="700.1"/><line x1="721.75" y1="597" x2="646.8" y2="700.1"/><line x1="721.75" y1="597" x2="600.5" y2="557.6"/>
 </g>
 <polygon points="721.8,558.0 800.1,571.5 751.8,638.4 672.1,665.3 657.0,576.0" fill="rgba(205,120,86,0.3)" stroke="#cd7856" stroke-width="2"/>
 <g fill="#cd7856"><circle cx="721.8" cy="558" r="3.5"/><circle cx="800.1" cy="571.5" r="3.5"/><circle cx="751.8" cy="638.4" r="3.5"/><circle cx="672.1" cy="665.3" r="3.5"/><circle cx="657" cy="576" r="3.5"/></g>
 <g font-family="Liberation Sans" font-size="10.5" fill="#666" text-anchor="end">
  <text x="719.5" y="510.5">100</text><text x="719.5" y="553.8">50</text><text x="719.5" y="595">0</text>
 </g>
 <g font-family="Liberation Sans" font-size="9.6" fill="#4a4a4a">
  <text x="721.75" y="459" text-anchor="middle">Công khai, minh bạch</text>
  <text x="854" y="556">Tiến độ giải</text><text x="854" y="567">quyết</text>
  <text x="588" y="556" text-anchor="end">Số hóa hồ sơ</text>
  <text x="570.6" y="711.5">Mức độ hài lòng</text>
  <text x="804" y="711.5">Dịch vụ trực tuyến</text>
 </g>
</svg>
</body></html>
